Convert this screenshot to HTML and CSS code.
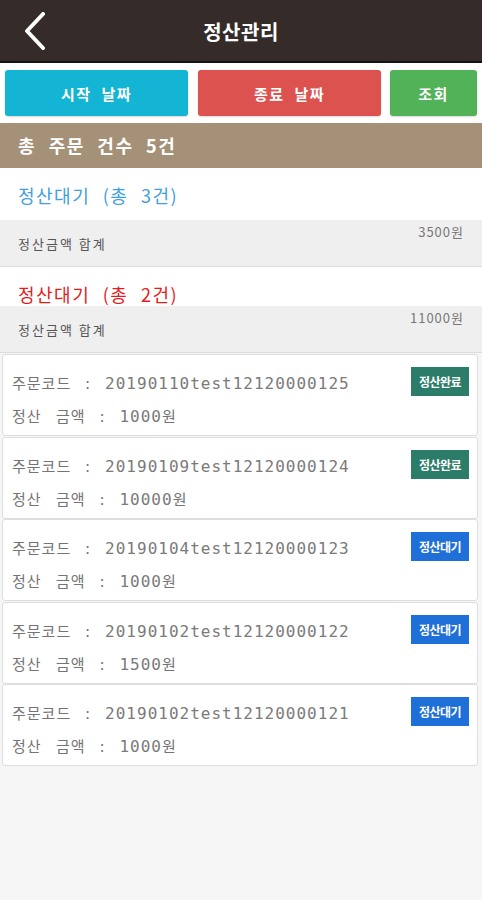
FILE: index.html
```html
<!DOCTYPE html>
<html>
<head>
	<title>정산관리</title>
	<meta charset="utf-8">
	<meta name="viewport" content="width=device-width, initial-scale=1">
	<link rel="stylesheet" href="styles.css">
</head>
<body>
	<div class="top-bar">
		<a class="back">
			<svg width="22" height="38" viewBox="0 0 22 38"><polyline points="19,2 3,19 19,36" fill="none" stroke="#fff" stroke-width="4" stroke-linecap="round" stroke-linejoin="round"/></svg>
		</a>
		<p class="top-title">정산관리</p>
		<span></span>
	</div>

	<div class="tools">
		<button class="btn btn-start">시작 날짜</button>
		<button class="btn btn-end">종료 날짜</button>
		<button class="btn btn-search">조회</button>
	</div>

	<p class="total">총 주문 건수 5건</p>

	<div class="group">
		<p class="group-title blue">정산대기 (총 3건)</p>
		<div class="sum">
			<span class="sum-label">정산금액 합계</span>
			<span class="sum-money">3500원</span>
		</div>
	</div>
	<div class="group">
		<p class="group-title red">정산대기 (총 2건)</p>
		<div class="sum">
			<span class="sum-label">정산금액 합계</span>
			<span class="sum-money">11000원</span>
		</div>
	</div>

	<div class="list">
		<div class="item">
			<div>
				<p class="line">주문코드 : <span class="num">20190110test12120000125</span></p>
				<p class="line">정산 금액 : <span class="num">1000</span>원</p>
			</div>
			<span class="state done">정산완료</span>
		</div>
		<div class="item">
			<div>
				<p class="line">주문코드 : <span class="num">20190109test12120000124</span></p>
				<p class="line">정산 금액 : <span class="num">10000</span>원</p>
			</div>
			<span class="state done">정산완료</span>
		</div>
		<div class="item">
			<div>
				<p class="line">주문코드 : <span class="num">20190104test12120000123</span></p>
				<p class="line">정산 금액 : <span class="num">1000</span>원</p>
			</div>
			<span class="state wait">정산대기</span>
		</div>
		<div class="item">
			<div>
				<p class="line">주문코드 : <span class="num">20190102test12120000122</span></p>
				<p class="line">정산 금액 : <span class="num">1500</span>원</p>
			</div>
			<span class="state wait">정산대기</span>
		</div>
		<div class="item">
			<div>
				<p class="line">주문코드 : <span class="num">20190102test12120000121</span></p>
				<p class="line">정산 금액 : <span class="num">1000</span>원</p>
			</div>
			<span class="state wait">정산대기</span>
		</div>
	</div>
</body>
</html>
```

FILE: styles.css
```css
body
{
	background: #f6f6f6;
	margin: 0px;
	padding: 0px;
	font-family: "Noto Sans CJK KR", "Noto Sans", sans-serif;
	color: #666;
}

p {margin: 0px;}

.top-bar
{
	display: grid;
	grid-template-columns: 70px 1fr 70px;
	align-items: center;
	height: 61px;
	background: #352b28;
	border-bottom: 2px solid #151111;
}

.back
{
	display: flex;
	padding-left: 24px;
	padding-top: 1px;
}

.top-title
{
	text-align: center;
	color: white;
	font-size: 20px;
	font-weight: bold;
	letter-spacing: 0.5px;
	padding-top: 2px;
}

.tools
{
	display: flex;
	background: white;
	padding: 7px 5px 7px 5px;
}

.btn
{
	height: 46px;
	border: none;
	border-radius: 3px;
	color: white;
	font-family: inherit;
	font-size: 15px;
	font-weight: bold;
	letter-spacing: 1.5px;
	word-spacing: 5px;
	box-shadow: 0px 1px 2px rgba(0, 0, 0, 0.15);
}

.btn-start
{
	width: 183px;
	background: #14b4d4;
	margin-right: 10px;
}

.btn-end
{
	width: 183px;
	background: #db524f;
	margin-right: 9px;
}

.btn-search
{
	flex: 1;
	background: #52b258;
}

.total
{
	height: 45px;
	line-height: 45px;
	background: #a59078;
	color: white;
	padding-left: 18px;
	font-size: 18px;
	font-weight: bold;
	letter-spacing: 1.5px;
	word-spacing: 7px;
}

.group {background: white;}

.group-title
{
	padding: 15px 18px 13px 18px;
	line-height: 24px;
	font-size: 18px;
	letter-spacing: 1.5px;
	word-spacing: 7px;
}

.group + .group .group-title {padding-bottom: 0px;}

.blue {color: #3f9fe0;}
.red {color: #e41c1c;}

.sum
{
	display: grid;
	grid-template-columns: 1fr auto;
	height: 46px;
	background: #efefef;
	border-bottom: 1px solid #dcdcdc;
	padding: 0px 18px;
	font-size: 13px;
}

.sum-label
{
	align-self: center;
	color: #555;
	letter-spacing: 2px;
}

.sum-money
{
	align-self: start;
	padding-top: 2px;
	color: #777;
	letter-spacing: 1px;
}

.list {padding: 1px 4px 0px 2px;}

.item
{
	display: flex;
	justify-content: space-between;
	align-items: flex-start;
	padding: 12px 8px 0px 9px;
	box-sizing: border-box;
	height: 82px;
	background: white;
	border: 1px solid #dedede;
	border-radius: 3px;
	margin-bottom: 0.5px;
}

.line
{
	line-height: 32px;
	font-size: 15px;
	letter-spacing: 1px;
	word-spacing: 10px;
	color: #747474;
	white-space: nowrap;
}

.num
{
	font-family: "DejaVu Sans Mono", monospace;
	font-size: 16px;
	letter-spacing: 1px;
	color: #7a7a7a;
}

.state
{
	height: 29px;
	line-height: 29px;
	width: 58px;
	text-align: center;
	color: white;
	font-size: 12px;
	font-weight: bold;
	letter-spacing: -0.5px;
}

.done {background: #2b7c69;}
.wait {background: #1f6fd8;}
```
